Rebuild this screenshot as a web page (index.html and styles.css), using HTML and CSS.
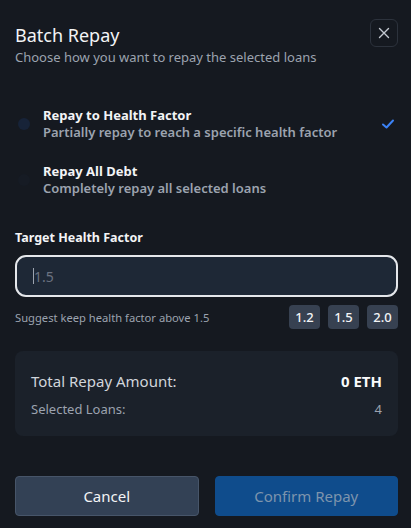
FILE: index.html
```html
<!DOCTYPE html>
<html>
<head>
<meta charset="utf-8">
<link rel="stylesheet" href="styles.css">
</head>
<body>
<div class="modal">
  <div class="header">
    <div class="titles">
      <h1 class="title">Batch Repay</h1>
      <p class="subtitle">Choose how you want to repay the selected loans</p>
    </div>
    <button class="close" aria-label="Close">
      <svg width="12" height="12" viewBox="0 0 12 12"><path d="M1.5 1.5 L10.5 10.5 M10.5 1.5 L1.5 10.5" stroke="#c4c9d1" stroke-width="1.4" stroke-linecap="round"/></svg>
    </button>
  </div>

  <div class="options">
    <div class="option selected">
      <span class="radio"></span>
      <div class="opt-text">
        <div class="opt-title">Repay to Health Factor</div>
        <div class="opt-desc">Partially repay to reach a specific health factor</div>
      </div>
      <svg class="check" width="14" height="12" viewBox="0 0 14 12"><path d="M2 6.5 L5.5 9.5 L12 2.5" fill="none" stroke="#3b82f6" stroke-width="2" stroke-linecap="round" stroke-linejoin="round"/></svg>
    </div>
    <div class="option">
      <span class="radio off"></span>
      <div class="opt-text">
        <div class="opt-title">Repay All Debt</div>
        <div class="opt-desc">Completely repay all selected loans</div>
      </div>
    </div>
  </div>

  <div class="field">
    <label class="label">Target Health Factor</label>
    <div class="input"><span class="caret"></span><span class="placeholder">1.5</span></div>
    <div class="hint-row">
      <span class="hint">Suggest keep health factor above 1.5</span>
      <div class="chips">
        <button class="chip">1.2</button>
        <button class="chip">1.5</button>
        <button class="chip">2.0</button>
      </div>
    </div>
  </div>

  <div class="summary">
    <div class="sum-row main">
      <span>Total Repay Amount:</span>
      <span class="amount">0 ETH</span>
    </div>
    <div class="sum-row sub">
      <span>Selected Loans:</span>
      <span>4</span>
    </div>
  </div>

  <div class="actions">
    <button class="btn cancel">Cancel</button>
    <button class="btn confirm">Confirm Repay</button>
  </div>
</div>
</body>
</html>
```

FILE: styles.css
```css
* { box-sizing: border-box; margin: 0; padding: 0; }
html, body { background: #151920; }
body {
  font-family: "Noto Sans", "Open Sans", sans-serif;
  color: #f3f4f6;
  width: 411px;
  height: 528px;
  overflow: hidden;
}
.modal {
  padding: 19px 13px 0 15px;
}
.header {
  display: flex;
  justify-content: space-between;
  align-items: flex-start;
}
.title {
  font-size: 18px;
  font-weight: 400;
  line-height: 28px;
  margin-top: 2px;
  color: #f3f4f6;
}
.subtitle {
  font-size: 13px;
  line-height: 18px;
  color: #9ca3af;
  margin-top: -1px;
}
.close {
  width: 28px;
  height: 28px;
  border: 1px solid #2c323c;
  border-radius: 6px;
  background: transparent;
  display: flex;
  align-items: center;
  justify-content: center;
}
.options {
  margin-top: 41px;
  display: flex;
  flex-direction: column;
  gap: 22px;
}
.option {
  display: flex;
  align-items: center;
  gap: 13px;
  padding-left: 3px;
}
.radio {
  width: 12px;
  height: 12px;
  border-radius: 50%;
  background: #172338;
  flex: none;
}
.radio.off { background: #161b24; }
.opt-text { flex: 1; }
.opt-title {
  font-size: 13px;
  font-weight: 700;
  line-height: 17px;
  color: #f3f4f6;
}
.opt-desc {
  font-size: 13px;
  font-weight: 600;
  line-height: 17px;
  color: #9ca3af;
}
.check { margin-right: 3px; }
.field { margin-top: 32px; }
.label {
  display: block;
  font-size: 12.5px;
  font-weight: 700;
  line-height: 18px;
  color: #f3f4f6;
}
.input {
  margin-top: 8px;
  height: 42px;
  border: 2px solid #e5e7eb;
  border-radius: 11px;
  background: #1e2836;
  display: flex;
  align-items: center;
  padding-left: 16px;
}
.caret {
  width: 1px;
  height: 16px;
  background: #9ca3af;
}
.placeholder {
  font-size: 14px;
  color: #6b7280;
}
.hint-row {
  margin-top: 8px;
  display: flex;
  justify-content: space-between;
  align-items: center;
}
.hint {
  font-size: 11.2px;
  color: #9ca3af;
}
.chips { display: flex; gap: 8px; }
.chip {
  height: 24px;
  width: 31px;
  border: none;
  border-radius: 4px;
  background: #374151;
  color: #f3f4f6;
  font-family: inherit;
  font-size: 13px;
  font-weight: 500;
}
.summary {
  margin-top: 22px;
  background: #1b212a;
  border-radius: 8px;
  padding: 20px 16px 18px;
}
.sum-row {
  display: flex;
  justify-content: space-between;
  align-items: center;
}
.sum-row.main {
  font-size: 15px;
  color: #d1d5db;
  line-height: 20px;
}
.amount { font-weight: 700; color: #f9fafb; }
.sum-row.sub {
  margin-top: 10px;
  font-size: 13px;
  line-height: 17px;
  color: #9ca3af;
}
.actions {
  margin-top: 40px;
  display: flex;
  gap: 16px;
}
.btn {
  flex: 1;
  height: 40px;
  border-radius: 4px;
  font-family: inherit;
  font-size: 15px;
}
.cancel {
  background: #334155;
  border: 1px solid #475569;
  color: #f3f4f6;
}
.confirm {
  background: #0f4c8c;
  border: 1px solid #0f4c8c;
  color: #7d94ad;
}
```
